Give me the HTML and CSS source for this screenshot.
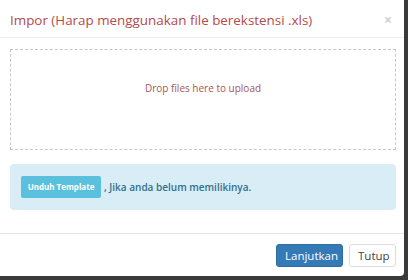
FILE: index.html
```html
<!DOCTYPE html>
<html lang="en">
<head>
    <meta charset="UTF-8">
    <meta name="viewport" content="width=device-width, initial-scale=1.0">
    <title>Impor</title>
    <link rel="stylesheet" href="styles.css">
</head>
<body>

    <!-- Import modal -->
    <div class="modal">
        <div class="modal-header">
            <h4 class="modal-title">Impor (Harap menggunakan file berekstensi .xls)</h4>
            <span class="close">&times;</span>
        </div>

        <div class="modal-body">
            <div class="dropzone">
                <span>Drop files here to upload</span>
            </div>

            <div class="alert">
                <a href="#" class="btn-info">Unduh Template</a>
                <span>, Jika anda belum memilikinya.</span>
            </div>
        </div>

        <div class="modal-footer">
            <button class="btn btn-primary">Lanjutkan</button>
            <button class="btn btn-default">Tutup</button>
        </div>
    </div>

</body>
</html>
```

FILE: styles.css
```css
* {
    margin: 0;
    padding: 0;
    box-sizing: border-box;
}

body {
    font-family: "Open Sans", Arial, sans-serif;
    background-color: #3a3a3a; /* page overlay */
    width: 408px;
    height: 280px;
    overflow: hidden;
}

.modal {
    width: 404px;
    height: 276px;
    background-color: #fff;
    border-radius: 0 0 4px 0;
    display: flex;
    flex-direction: column;
}

/* Header */
.modal-header {
    display: flex;
    justify-content: space-between;
    align-items: center;
    height: 38px;
    padding: 2px 12px 0 10px;
    border-bottom: 1px solid #eef0f2;
}

.modal-title {
    font-family: "Open Sans", sans-serif;
    font-size: 13.4px;
    font-weight: 400;
    color: #b44a4a; /* red title */
}

.close {
    font-size: 14px;
    color: #d0d0d0;
    font-weight: 700;
}

/* Body */
.modal-body {
    padding: 11px 8px 0 10px;
    flex: 1;
}

.dropzone {
    height: 101px;
    border: 1px dashed #c8c8c8;
    display: flex;
    justify-content: center;
    padding-top: 31px;
}

.dropzone span {
    font-family: "Open Sans", sans-serif;
    font-size: 10px;
    color: #a85458;
}

.alert {
    margin-top: 14px;
    height: 46px;
    background-color: #d9edf7;
    border-radius: 4px;
    display: flex;
    align-items: center;
    padding: 0 11px;
    font-family: "Open Sans", sans-serif;
    font-size: 10px;
    font-weight: 600;
    color: #31708f;
}

.btn-info {
    display: inline-block;
    height: 22px;
    line-height: 22px;
    width: 80px;
    text-align: center;
    background-color: #5bc0de;
    color: #fff;
    border-radius: 2px;
    font-size: 8px;
    font-weight: 700;
    text-decoration: none;
    margin-right: 3px;
}

/* Footer */
.modal-footer {
    height: 43px;
    border-top: 1px solid #e5e5e5;
    display: flex;
    justify-content: flex-end;
    align-items: center;
    gap: 6px;
    padding: 0 8px 0 0;
}

.btn {
    font-family: "Open Sans", sans-serif;
    font-size: 11.5px;
    height: 23px;
    border-radius: 3px;
    padding: 0 8px;
}

.btn-primary {
    background-color: #337ab7;
    border: 1px solid #2e6da4;
    color: #fff;
    width: 67px;
}

.btn-default {
    background-color: #fff;
    border: 1px solid #ddd;
    color: #444;
    width: 47px;
}
```
